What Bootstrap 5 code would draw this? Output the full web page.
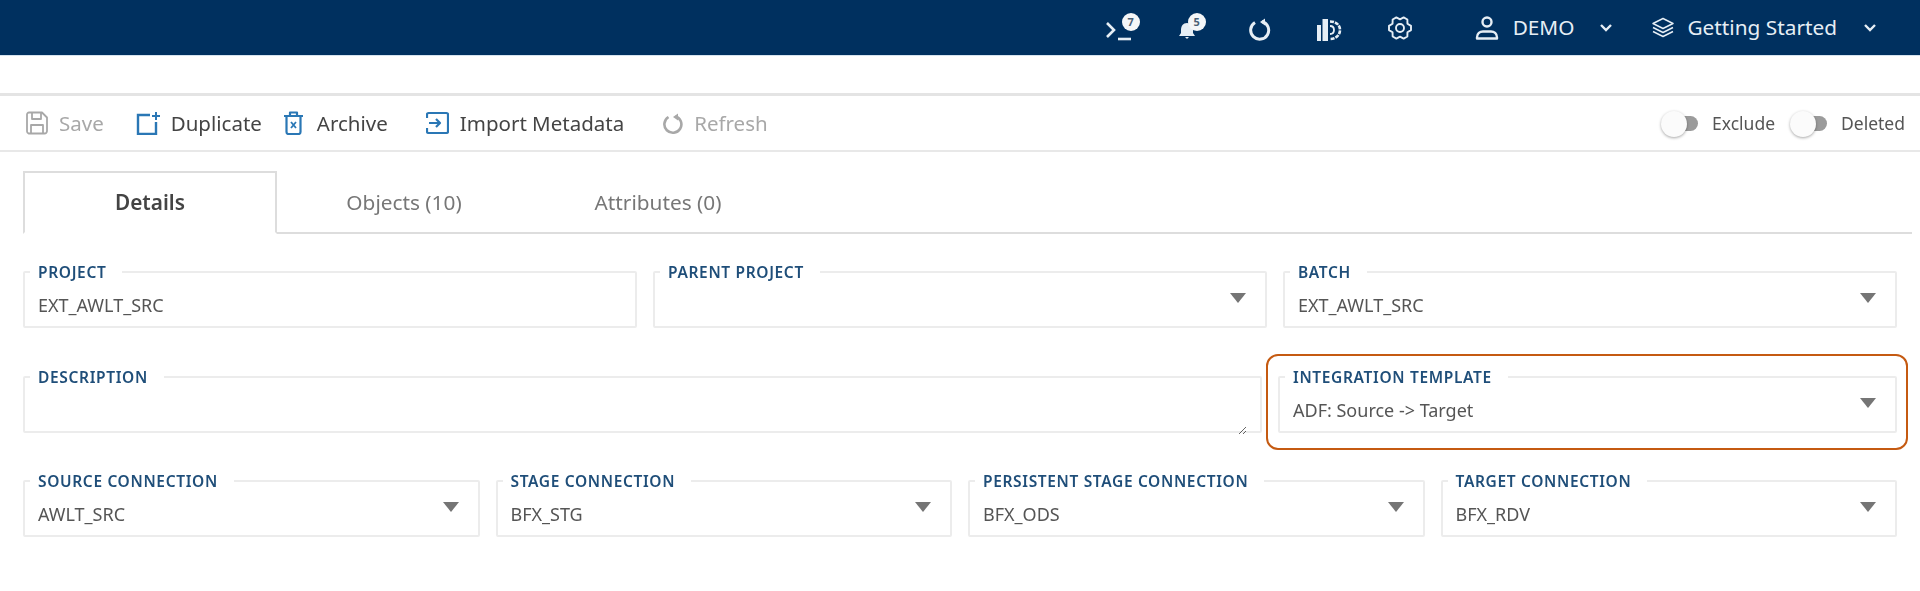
<!DOCTYPE html>
<html lang="en">
<head>
    <meta charset="UTF-8">
    <meta name="viewport" content="width=device-width, initial-scale=1.0">
    <title>Project Details</title>
    <link rel="stylesheet" href="https://cdn.jsdelivr.net/npm/bootstrap@5.3.0/dist/css/bootstrap.min.css">
    <style>
        body { font-family: "Noto Sans", "Open Sans", sans-serif; color: #444; background: #fff; overflow: hidden; filter: blur(.4px); }
        svg { display: block; flex: none; }

        .top-bar { height: 56px; background: #00305f; border-bottom: 1px solid #d5e3ef; color: #e6eef5; font-size: 20.8px; }
        .top-item { position: relative; }
        .top-badge { position: absolute; top: 0; width: 18px; height: 18px; border-radius: 50%; background: #f4f6f8; color: #4a5f75; font-size: 11px; font-weight: 700; line-height: 18px; text-align: center; }
        .i-term { margin-right: 45px; }
        .i-bell { margin-right: 53px; }
        .i-refresh { margin-right: 46px; }
        .i-chart { margin-right: 46px; }
        .i-gear { margin-right: 63px; }
        .i-user { margin-right: 14px; }
        .i-demo { margin-right: 26px; }
        .i-chev1 { margin-right: 40px; }
        .i-layers { margin-right: 13px; }
        .i-started { margin-right: 27px; }
        .i-chev2 { margin-right: 44px; }

        .tool-bar { margin-top: 37px; height: 59px; border-top: 3px solid #e4e4e4; border-bottom: 2px solid #e8e8e8; padding: 0 15px 0 26px; }
        .tool-btn { color: #444; font-size: 20.5px; border: 0; padding: 0; gap: 11px; }
        .tool-btn:disabled { color: #a8a8a8; opacity: 1; }
        .gap-dup { margin-right: 22px; }
        .gap-save { margin-right: 32px; }
        .gap-arch { margin-right: 38px; gap: 14px; }
        .gap-imp { margin-right: 39px; }

        .tgl { position: relative; display: block; width: 36px; height: 15px; background: #9b9b9b; border-radius: 8px; }
        .tgl::before { content: ""; position: absolute; left: -1px; top: -5px; width: 26px; height: 26px; border-radius: 50%; background: #fbfbfb; box-shadow: 0 1px 3px rgba(0, 0, 0, .35); }
        .tgl-label { font-size: 17.5px; color: #555; margin: 0 0 0 14px; }
        .tgl-next { margin-left: 16px; }

        .tab-strip { margin: 19px 8px 0 23px; border-bottom: 2px solid #ddd; }
        .tab-strip .nav-link { width: 254px; height: 61px; padding: 13px 0 0; line-height: 37px; text-align: center; color: #777; font-size: 20.8px; border: 0; }
        .tab-strip .nav-link.active { color: #444; font-weight: 600; border: 2px solid #ddd; border-bottom-color: #fff; border-radius: 0; margin-bottom: -2px; height: 63px; padding-top: 11px; }

        .form-wrap { padding: 29px 23px 0; }
        .form-line { display: flex; gap: 16px; }
        .form-line + .form-line { margin-top: 40px; }
        .form-line.last { margin-top: 39px; }
        .fld { flex: 1 1 0; min-width: 0; height: 65px; margin: 0; padding: 0 13px; border: 2px solid #ececec; border-radius: 2px; }
        .fld legend { margin: 0 0 0 -8px; padding: 0 16px 0 8px; font-size: 15.5px; font-weight: 600; line-height: 18px; letter-spacing: .65px; color: #1f4e79; }
        .fld .form-control, .fld .form-select { padding: 0; border: 0; border-radius: 0; box-shadow: none; background-color: transparent; color: #555; font-size: 18px; line-height: 26px; height: 28px; margin-top: 10px; }
        .fld .form-select { padding-right: 24px; background-position: right 6px top 2px; background-size: 16px 10px; background-image: url("data:image/svg+xml,%3csvg xmlns='http://www.w3.org/2000/svg' viewBox='0 0 16 10'%3e%3cpath fill='%23757575' d='M0 0h16L8 10z'/%3e%3c/svg%3e"); }
        .fld textarea.form-control { height: 32px; margin-top: 8px; }
        .fld-wide { flex: none; width: 1239px; }
        .fld-tpl-wrap { position: relative; flex: 1 1 0; display: flex; }
        .tpl-mark { position: absolute; top: -14px; left: -12px; right: -11px; bottom: -17px; border: 2px solid #c55a11; border-radius: 12px; pointer-events: none; }
    </style>
</head>
<body>
<header class="top-bar d-flex align-items-center justify-content-end">
    <div class="top-item i-term">
        <svg width="28" height="30" viewBox="0 0 28 30" fill="none" stroke="#e6eef5" stroke-width="2.600"><path d="M2 10l7 7-7 7"/><path d="M13 26h13"/></svg>
        <span class="top-badge" style="left:17px">7</span>
    </div>
    <div class="top-item i-bell">
        <svg width="18" height="30" viewBox="0 0 18 30" fill="#e6eef5"><path d="M9 10c-4 0-6 3-6 7v3l-2 3h16l-2-3v-3c0-4-2-7-6-7zM7 24h4l-2 2z"/></svg>
        <span class="top-badge" style="left:10px">5</span>
    </div>
    <div class="top-item i-refresh">
        <svg width="22" height="30" viewBox="0 0 22 30" fill="none" stroke="#e6eef5" stroke-width="3"><path d="M6 9.500a9 9 0 1 0 7-1"/><path d="M11 9l5-3.500v7z" fill="#e6eef5" stroke="none"/></svg>
    </div>
    <div class="top-item i-chart">
        <svg width="25" height="30" viewBox="0 0 25 30" fill="#e6eef5"><path d="M0 12h4v16H0zM5.500 6H11v22H5.500z"/><path d="M13 8.500c6 0 10 3.500 10 8.500s-4 9-10 9" fill="none" stroke="#e6eef5" stroke-width="2.600" stroke-dasharray="4 1"/><path d="M13 13c2.500 0 4 1.500 4 4s-1.500 4-4 4" fill="none" stroke="#e6eef5" stroke-width="1.800"/></svg>
    </div>
    <div class="top-item i-gear">
        <svg width="24" height="30" viewBox="0 0 24 30" fill="none" stroke="#e6eef5" stroke-width="1.900" stroke-linejoin="round"><path d="M23 12.900V17.100L19.450 19.300 19.350 23.450 15.650 25.600 12 23.600 8.350 25.600 4.650 23.450 4.550 19.300 1 17.100V12.900L4.550 10.700 4.650 6.550 8.350 4.400 12 6.400 15.650 4.400 19.350 6.550 19.450 10.700z"/><circle cx="12" cy="15" r="4"/></svg>
    </div>
    <div class="top-item i-user">
        <svg width="24" height="24" viewBox="0 0 24 24" fill="none" stroke="#e6eef5" stroke-width="2.400" stroke-linejoin="round"><circle cx="12" cy="6" r="4.500"/><path d="M2 22.500v-1c0-4 3-6 6-6h8c3 0 6 2 6 6v1z"/></svg>
    </div>
    <span class="i-demo">DEMO</span>
    <svg class="i-chev1" width="12" height="8" viewBox="0 0 12 8" fill="none" stroke="#e6eef5" stroke-width="2.400"><path d="M1 1l5 5 5-5"/></svg>
    <svg class="i-layers" width="22" height="24" viewBox="0 0 22 24" fill="none" stroke="#e6eef5" stroke-width="1.500" stroke-linejoin="round"><path d="M11 2.500l10 5-10 5-10-5zM1 11.500l10 5 10-5M1 15.500l10 5 10-5"/></svg>
    <span class="i-started">Getting Started</span>
    <svg class="i-chev2" width="12" height="8" viewBox="0 0 12 8" fill="none" stroke="#e6eef5" stroke-width="2.400"><path d="M1 1l5 5 5-5"/></svg>
</header>

<div class="tool-bar d-flex align-items-center">
    <button class="btn tool-btn d-flex align-items-center gap-save" disabled>
        <svg width="22" height="24" viewBox="0 0 22 24" fill="none" stroke="#a8a8a8" stroke-width="1.800" stroke-linejoin="round"><path d="M3 1.500h13l5 5V20a2.500 2.500 0 0 1-2.500 2.500h-16A2.500 2.500 0 0 1 1 20V3.500a2 2 0 0 1 2-2z"/><path d="M6 2v6h9V2M5 22v-8h12v8"/></svg>
        Save
    </button>
    <button class="btn tool-btn d-flex align-items-center gap-dup">
        <svg width="24" height="24" viewBox="0 0 24 24" fill="none" stroke="#2a77b5" stroke-width="2.400"><path d="M14 4H2v19h18V11"/><path d="M20 1v8M16 5h8" stroke-width="2"/></svg>
        Duplicate
    </button>
    <button class="btn tool-btn d-flex align-items-center gap-arch">
        <svg width="19" height="24" viewBox="0 0 19 24" fill="none" stroke="#2a77b5" stroke-width="2.200" stroke-linejoin="round"><path d="M2.500 6v15a2 2 0 0 0 2 2h10a2 2 0 0 0 2-2V6M0 5h19M6 5V1.500h7V5"/><path d="M7 11l5 6M12 11l-5 6" stroke-width="1.800"/></svg>
        Archive
    </button>
    <button class="btn tool-btn d-flex align-items-center gap-imp">
        <svg width="23" height="24" viewBox="0 0 23 24" fill="none" stroke="#2a77b5" stroke-width="2.200" stroke-linejoin="round"><path d="M1 7V3.500A1.500 1.500 0 0 1 2.500 2h18A1.500 1.500 0 0 1 22 3.500v17a1.500 1.500 0 0 1-1.500 1.500h-18A1.500 1.500 0 0 1 1 20.500V17"/><path d="M3 12h11M10 8l4 4-4 4"/></svg>
        Import Metadata
    </button>
    <button class="btn tool-btn d-flex align-items-center" disabled>
        <svg width="20" height="24" viewBox="0 0 20 24" fill="none" stroke="#a8a8a8" stroke-width="2.600"><path d="M5.500 6a8.500 8.500 0 1 0 7-.8"/><path d="M10 6l5-3.500v7z" fill="#a8a8a8" stroke="none"/></svg>
        Refresh
    </button>
    <div class="ms-auto d-flex align-items-center">
        <span class="tgl"></span><span class="tgl-label">Exclude</span>
        <span class="tgl tgl-next"></span><span class="tgl-label">Deleted</span>
    </div>
</div>

<ul class="nav tab-strip">
    <li class="nav-item"><a class="nav-link active" href="#">Details</a></li>
    <li class="nav-item"><a class="nav-link" href="#">Objects (10)</a></li>
    <li class="nav-item"><a class="nav-link" href="#">Attributes (0)</a></li>
</ul>

<form class="form-wrap">
    <div class="form-line">
        <fieldset class="fld">
            <legend class="float-none w-auto">PROJECT</legend>
            <input class="form-control" value="EXT_AWLT_SRC">
        </fieldset>
        <fieldset class="fld">
            <legend class="float-none w-auto">PARENT PROJECT</legend>
            <select class="form-select"><option></option></select>
        </fieldset>
        <fieldset class="fld">
            <legend class="float-none w-auto">BATCH</legend>
            <select class="form-select"><option>EXT_AWLT_SRC</option></select>
        </fieldset>
    </div>
    <div class="form-line">
        <fieldset class="fld fld-wide">
            <legend class="float-none w-auto">DESCRIPTION</legend>
            <textarea class="form-control"></textarea>
        </fieldset>
        <div class="fld-tpl-wrap">
            <fieldset class="fld">
                <legend class="float-none w-auto">INTEGRATION TEMPLATE</legend>
                <select class="form-select"><option>ADF: Source -&gt; Target</option></select>
            </fieldset>
            <div class="tpl-mark"></div>
        </div>
    </div>
    <div class="form-line last">
        <fieldset class="fld">
            <legend class="float-none w-auto">SOURCE CONNECTION</legend>
            <select class="form-select"><option>AWLT_SRC</option></select>
        </fieldset>
        <fieldset class="fld">
            <legend class="float-none w-auto">STAGE CONNECTION</legend>
            <select class="form-select"><option>BFX_STG</option></select>
        </fieldset>
        <fieldset class="fld">
            <legend class="float-none w-auto">PERSISTENT STAGE CONNECTION</legend>
            <select class="form-select"><option>BFX_ODS</option></select>
        </fieldset>
        <fieldset class="fld">
            <legend class="float-none w-auto">TARGET CONNECTION</legend>
            <select class="form-select"><option>BFX_RDV</option></select>
        </fieldset>
    </div>
</form>

<script src="https://cdn.jsdelivr.net/npm/bootstrap@5.3.0/dist/js/bootstrap.bundle.min.js"></script>
</body>
</html>
